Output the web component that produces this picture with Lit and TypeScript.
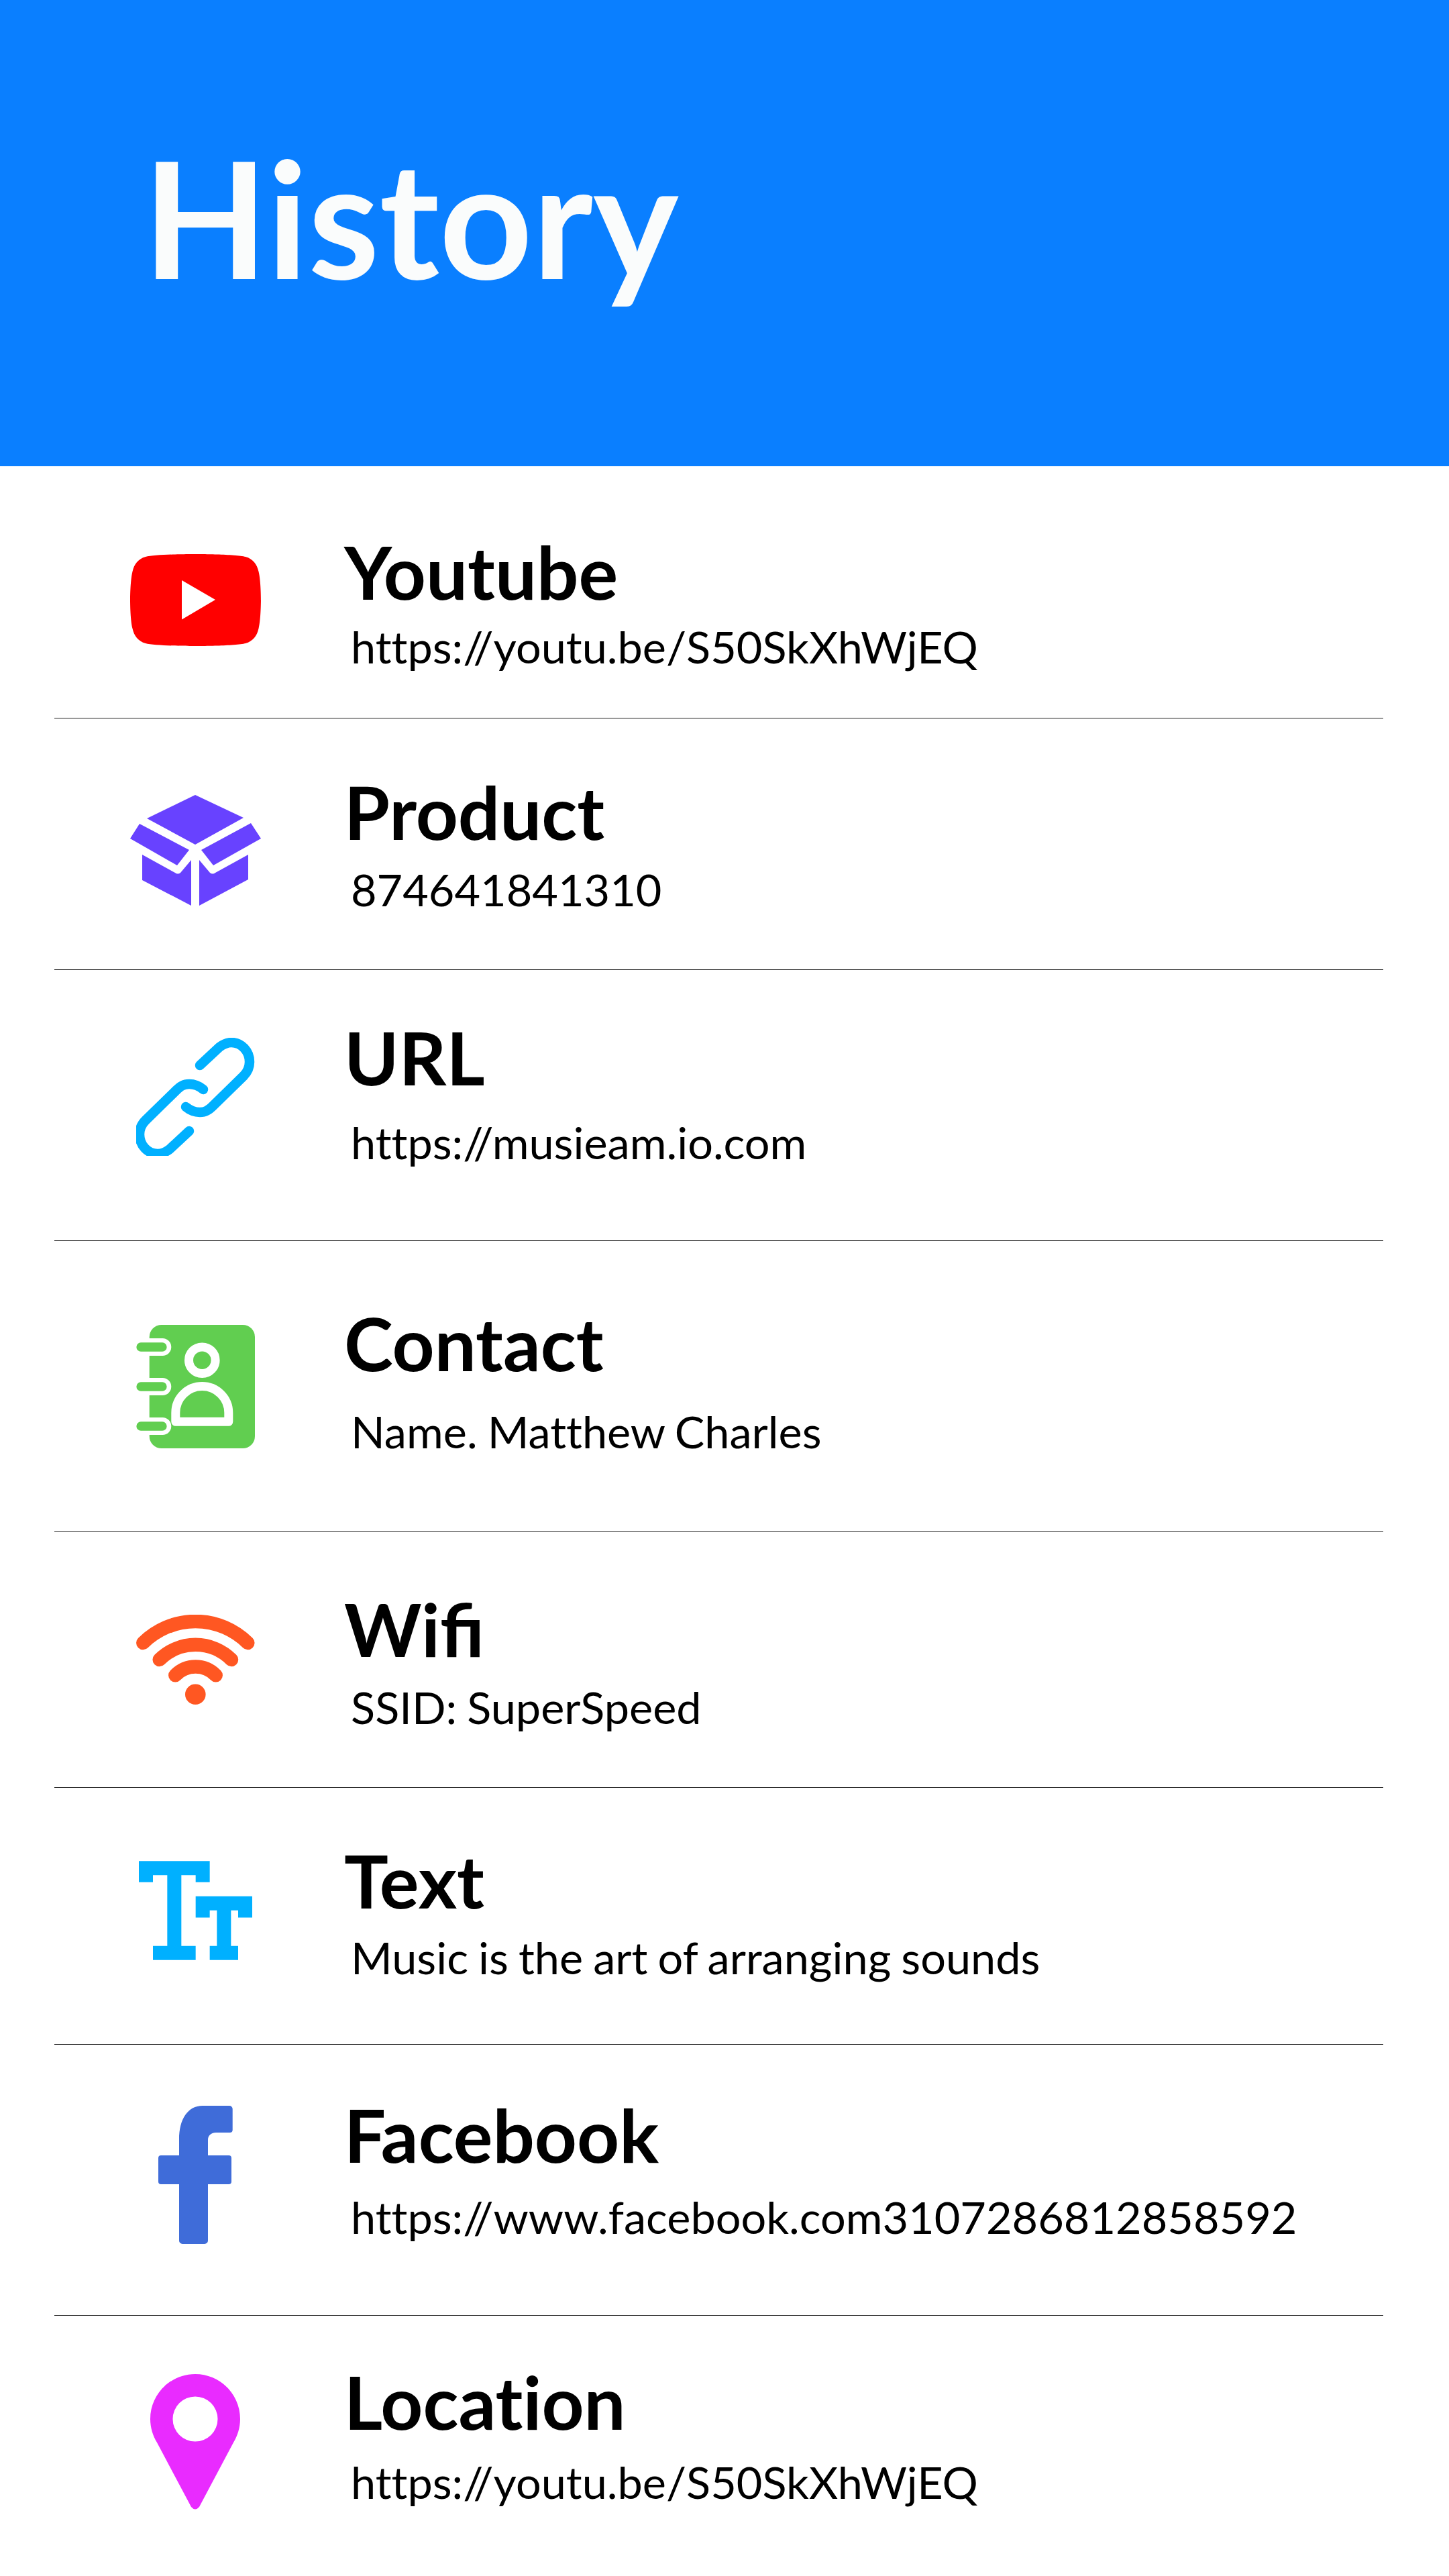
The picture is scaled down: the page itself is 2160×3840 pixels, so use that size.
import { LitElement, html, css } from 'lit';
import { customElement } from 'lit/decorators.js';

interface HistoryItem {
    kind: string;
    title: string;
    detail: string;
}

const ITEMS: HistoryItem[] = [
    { kind: 'youtube', title: 'Youtube', detail: 'https://youtu.be/S50SkXhWjEQ' },
    { kind: 'product', title: 'Product', detail: '874641841310' },
    { kind: 'url', title: 'URL', detail: 'https://musieam.io.com' },
    { kind: 'contact', title: 'Contact', detail: 'Name. Matthew Charles' },
    { kind: 'wifi', title: 'Wifi', detail: 'SSID: SuperSpeed' },
    { kind: 'text', title: 'Text', detail: 'Music is the art of arranging sounds' },
    { kind: 'facebook', title: 'Facebook', detail: 'https://www.facebook.com3107286812858592' },
    { kind: 'location', title: 'Location', detail: 'https://youtu.be/S50SkXhWjEQ' },
];

@customElement('app-root')
export class AppRoot extends LitElement {
    static styles = css`
        :host {
            display: block;
            width: 2160px;
            min-height: 3840px;
            background: #ffffff;
            font-family: 'Lato', 'Noto Sans', sans-serif;
            color: #000000;
        }

        .header {
            height: 695px;
            box-sizing: border-box;
            padding: 198px 0 0 213px;
            background: #0a7fff;
        }

        .header h1 {
            margin: 0;
            font-size: 242px;
            line-height: 250px;
            font-weight: 700;
            color: #fafcfc;
        }

        .list {
            display: flex;
            flex-direction: column;
            padding: 0 98px 0 81px;
        }

        .row {
            display: flex;
            box-sizing: border-box;
            height: var(--row);
            border-bottom: 1px solid #1a1a1a;
        }

        .row:last-child {
            border-bottom: none;
        }

        .youtube { --row: 376px; --icon: 131px; --title: 101px; --gap: 21px; }
        .product { --row: 375px; --icon: 114px; --title: 83px; --gap: 25px; }
        .url { --row: 404px; --icon: 101px; --title: 74px; --gap: 36px; }
        .contact { --row: 433px; --icon: 125px; --title: 96px; --gap: 41px; }
        .wifi { --row: 382px; --icon: 124px; --title: 89px; --gap: 26px; }
        .text { --row: 383px; --icon: 109px; --title: 82px; --gap: 24px; }
        .facebook { --row: 404px; --icon: 91px; --title: 78px; --gap: 32px; }
        .location { --row: 388px; --icon: 87px; --title: 72px; --gap: 29px; }

        .icon {
            flex: none;
            display: flex;
            justify-content: center;
            align-items: flex-start;
            width: 420px;
            padding-top: var(--icon);
        }

        .icon svg {
            display: block;
        }

        .copy {
            padding: var(--title) 0 0 12px;
        }

        .title {
            font-size: 110px;
            line-height: 110px;
            font-weight: 700;
            font-variant-ligatures: none;
        }

        .wifi .title {
            font-variant-ligatures: normal;
        }

        .detail {
            margin: var(--gap) 0 0 10px;
            font-size: 66.6px;
            line-height: 72px;
            font-weight: 400;
            font-variant-ligatures: none;
            word-spacing: -2px;
            white-space: nowrap;
        }
    `;

    private _renderIcon(kind: string) {
        switch (kind) {
            case 'youtube':
                return html`<svg width="195" height="137" viewBox="0 0 195 137">
                    <path fill="#ff0000" d="M97.5 0C97.5 0 158 0 172 4C183 7 189 15 191.5 26C195 40 195 68.5 195 68.5C195 68.5 195 97 191.5 111C189 122 183 130 172 133C158 137 97.5 137 97.5 137C97.5 137 37 137 23 133C12 130 6 122 3.5 111C0 97 0 68.5 0 68.5C0 68.5 0 40 3.5 26C6 15 12 7 23 4C37 0 97.5 0 97.5 0Z" />
                    <path fill="#ffffff" d="M77 39L127 68L77 97.5Z" />
                </svg>`;
            case 'product':
                return html`<svg width="195" height="165" viewBox="0 0 195 165" fill="#6842ff">
                    <path d="M97 0L169 34L97 74L25 35Z" />
                    <path d="M14 43L88 82L70 105L0 65Z" />
                    <path d="M180 42L195 65L124 105L106 82Z" />
                    <path d="M18 89L67 116Q71 119 75 116L91 97V165L18 127Z" />
                    <path d="M103 97L119 116Q123 119 127 116L176 89V126L103 165Z" />
                </svg>`;
            case 'url':
                return html`<svg width="177" height="176" viewBox="53 47 177 176" fill="none" stroke="#00b0ff" stroke-width="14.5" stroke-linecap="round">
                    <path d="M148 88L177 61C185 55 190 54 195 54C210 54 222 67 222 83C222 91 219 98 213 104L168 148C161 155 156 158 148 158C140 158 133 155 127 150" />
                    <path transform="rotate(180 140 137)" d="M148 88L177 61C185 55 190 54 195 54C210 54 222 67 222 83C222 91 219 98 213 104L168 148C161 155 156 158 148 158C140 158 133 155 127 150" />
                </svg>`;
            case 'contact':
                return html`<svg width="177" height="184" viewBox="53 35 177 184">
                    <rect x="72.7" y="35" width="157.3" height="184" rx="18" fill="#61ce50" />
                    <g stroke-linecap="round" fill="none">
                        <g stroke="#ffffff" stroke-width="26">
                            <path d="M40 68H92.3M40 127H92.3M40 186H92.3" />
                        </g>
                        <g stroke="#61ce50" stroke-width="13.3">
                            <path d="M60 68H92M60 127H92M60 186H92" />
                        </g>
                    </g>
                    <circle cx="151.3" cy="87.7" r="19.8" fill="none" stroke="#ffffff" stroke-width="13" />
                    <path d="M111.8 179.3V166A39.5 39.5 0 0 1 190.8 166V179.3Z" fill="none" stroke="#ffffff" stroke-width="13" stroke-linejoin="round" />
                </svg>`;
            case 'wifi':
                return html`<svg width="177" height="134" viewBox="53 47 177 134" fill="none" stroke="#ff5722" stroke-width="20.5" stroke-linecap="round">
                    <path d="M63.3 89A111 111 0 0 1 219.3 89" />
                    <path d="M87.7 114A76 76 0 0 1 195 114" />
                    <path d="M111.3 137.3A42 42 0 0 1 171.7 137.3" />
                    <circle cx="141.3" cy="165.7" r="15.3" fill="#ff5722" stroke="none" />
                </svg>`;
            case 'text':
                return html`<svg width="169" height="148" viewBox="171 102 507 443" fill="#00b0ff">
                    <path d="M171 102H488V197H425V165H361V482H425V545H234V482H298V165H234V197H171Z" />
                    <path d="M425 260H678V355H615V323H583V482H615V545H488V482H520V323H488V355H425Z" />
                </svg>`;
            case 'facebook':
                return html`<svg width="111" height="206" viewBox="0 0 111 206">
                    <path fill="#3f6cd9" d="M66 0H106A4.7 4.7 0 0 1 110.7 4.7V36A4 4 0 0 1 106.7 40H86C79 40 74 44 74 51V74H105A4 4 0 0 1 109 78V113A4 4 0 0 1 105 117H74V201A5 5 0 0 1 69 206H36A5 5 0 0 1 31 201V117H4A4 4 0 0 1 0 113V78A4 4 0 0 1 4 74H31V50C31 20 44 0 66 0Z" />
                </svg>`;
            case 'location':
                return html`<svg width="134" height="202" viewBox="0 0 134 202">
                    <path fill="#e92bff" fill-rule="evenodd" d="M67 0C104 0 134 30 134 67C134 80 130 92 124 102L73 198Q67 205 61 198L10 102C4 92 0 80 0 67C0 30 30 0 67 0ZM67 33.5A33.5 33.5 0 1 0 67 100.5A33.5 33.5 0 1 0 67 33.5Z" />
                </svg>`;
            default:
                return html``;
        }
    }

    render() {
        return html`
            <div class="header"><h1>History</h1></div>
            <div class="list">
                ${ITEMS.map(
                    (item) => html`
                        <div class="row ${item.kind}">
                            <div class="icon">${this._renderIcon(item.kind)}</div>
                            <div class="copy">
                                <div class="title">${item.title}</div>
                                <div class="detail">${item.detail}</div>
                            </div>
                        </div>
                    `,
                )}
            </div>
        `;
    }
}
